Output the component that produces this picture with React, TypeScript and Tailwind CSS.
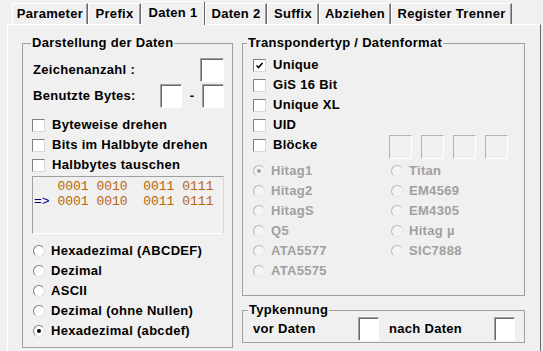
import React from "react";

const tabs = [
  { label: "Parameter", w: "w-[76px]" },
  { label: "Prefix", w: "w-[53px]" },
  { label: "Daten 1", w: "w-[64px]", active: true },
  { label: "Daten 2", w: "w-[62px]" },
  { label: "Suffix", w: "w-[52px]" },
  { label: "Abziehen", w: "w-[72px]" },
  { label: "Register Trenner", w: "w-[121px]" },
];

const sunken = "border border-t-[#a0a0a0] border-l-[#a0a0a0] border-b-white border-r-white shadow-[inset_1px_1px_0_#696969]";

function Check({ checked, label }: { checked?: boolean; label: string }) {
  return (
    <div className="h-[20px] flex items-center gap-[7px]">
      <span className="w-[13px] h-[13px] bg-white border border-t-[#808080] border-l-[#808080] border-b-[#d8d8d8] border-r-[#d8d8d8] flex items-center justify-center">
        {checked && (
          <svg width="9" height="9" viewBox="0 0 9 9">
            <path d="M1.5 4.5 L3.5 6.5 L7.5 2" fill="none" stroke="#000" strokeWidth="1.6" />
          </svg>
        )}
      </span>
      <span>{label}</span>
    </div>
  );
}

function Radio({ checked, label, disabled }: { checked?: boolean; label: string; disabled?: boolean }) {
  return (
    <div className={`h-[20px] flex items-center gap-[6px] ${disabled ? "text-[#a0a0a0]" : ""}`}>
      <span
        className={`w-[12px] h-[12px] rounded-full border flex items-center justify-center ${
          disabled
            ? "bg-[#f4f4f4] border-t-[#b8b8b8] border-l-[#b8b8b8] border-b-[#e8e8e8] border-r-[#e8e8e8]"
            : "bg-white border-t-[#808080] border-l-[#808080] border-b-[#e0e0e0] border-r-[#e0e0e0]"
        }`}
      >
        {checked && <span className={`w-[4px] h-[4px] rounded-full ${disabled ? "bg-[#a0a0a0]" : "bg-black"}`} />}
      </span>
      <span>{label}</span>
    </div>
  );
}

export default function App() {
  return (
    <div className="w-[543px] h-[351px] overflow-hidden bg-[#f0f0f0] text-black text-[13px] font-bold tracking-[0.3px] font-['Liberation_Sans',Arial,sans-serif] select-none">
      {/* tab strip */}
      <div className="h-[24px] flex items-end pl-[12px]">
        {tabs.map((t) =>
          t.active ? (
            <div
              key={t.label}
              className={`${t.w} h-[24px] -mb-px relative z-10 bg-[#f0f0f0] border-t border-l border-white border-r border-r-[#696969] flex items-center justify-center pb-[2px]`}
            >
              {t.label}
            </div>
          ) : (
            <div
              key={t.label}
              className={`${t.w} h-[21px] border-t border-l border-white border-r border-r-[#696969] shadow-[inset_-1px_0_0_#a0a0a0] flex items-center justify-center`}
            >
              {t.label}
            </div>
          )
        )}
      </div>

      {/* tab page */}
      <div className="ml-[7px] w-[534px] h-[330px] border-t border-l border-white border-r border-r-[#696969] flex pl-[14px] pt-[10px]">
        {/* left group */}
        <fieldset className="w-[211px] h-[313px] border border-[#a0a0a0]">
          <legend className="ml-[8px] px-[1px] leading-[16px]">Darstellung der Daten</legend>
          <div className="pl-[10px] pr-[8px] flex flex-col">
            <div className="mt-[7px] h-[24px] flex items-center justify-between">
              <span>Zeichenanzahl :</span>
              <span className={`w-[24px] h-[24px] bg-white ${sunken}`} />
            </div>
            <div className="mt-[2px] h-[24px] flex items-center">
              <span className="flex-1">Benutzte Bytes:</span>
              <span className={`w-[22px] h-[24px] bg-white ${sunken}`} />
              <span className="w-[20px] text-center">-</span>
              <span className={`w-[22px] h-[24px] bg-white ${sunken}`} />
            </div>
            <div className="mt-[7px] -ml-px flex flex-col">
              <Check label="Byteweise drehen" />
              <Check label="Bits im Halbbyte drehen" />
              <Check label="Halbbytes tauschen" />
            </div>
            <div className="mt-[1px] -ml-px w-[192px] h-[58px] border border-[#a0a0a0] border-b-white border-r-[#d8d8d8] pt-[2px] pl-[1px] font-['Liberation_Mono',monospace] font-normal tracking-normal text-[13px] leading-[15px] whitespace-pre">
              <div className="text-[#b8650a]">{"   0001 0010  0011 0111"}</div>
              <div className="text-[#b8650a]">
                <span className="text-[#000080]">{"=> "}</span>
                {"0001 0010  0011 0111"}
              </div>
            </div>
            <div className="mt-[7px] flex flex-col">
              <Radio label="Hexadezimal (ABCDEF)" />
              <Radio label="Dezimal" />
              <Radio label="ASCII" />
              <Radio label="Dezimal (ohne Nullen)" />
              <Radio label="Hexadezimal (abcdef)" checked />
            </div>
          </div>
        </fieldset>

        {/* right column */}
        <div className="ml-[9px] w-[283px] flex flex-col">
          <fieldset className="h-[261px] border border-[#a0a0a0]">
            <legend className="ml-[4px] px-[1px] leading-[16px]">Transpondertyp / Datenformat</legend>
            <div className="pl-[10px] mt-[4px] flex flex-col">
              <Check label="Unique" checked />
              <Check label="GiS 16 Bit" />
              <Check label="Unique XL" />
              <Check label="UID" />
              <div className="flex items-start">
                <div className="w-[136px]">
                  <Check label="Blöcke" />
                </div>
                <div className="flex gap-[9px]">
                  {[0, 1, 2, 3].map((i) => (
                    <span key={i} className="w-[23px] h-[24px] bg-[#f0f0f0] border border-[#b4b4b4] border-b-white border-r-white" />
                  ))}
                </div>
              </div>
              <div className="mt-[2px] grid grid-cols-[138px_1fr]">
                <Radio label="Hitag1" checked disabled />
                <Radio label="Titan" disabled />
                <Radio label="Hitag2" disabled />
                <Radio label="EM4569" disabled />
                <Radio label="HitagS" disabled />
                <Radio label="EM4305" disabled />
                <Radio label="Q5" disabled />
                <Radio label="Hitag µ" disabled />
                <Radio label="ATA5577" disabled />
                <Radio label="SIC7888" disabled />
                <Radio label="ATA5575" disabled />
              </div>
            </div>
          </fieldset>

          <fieldset className="mt-[6px] h-[41px] border border-[#a0a0a0]">
            <legend className="ml-[5px] px-[1px] leading-[16px]">Typkennung</legend>
            <div className="pl-[10px] -mt-px h-[24px] flex items-center">
              <span className="w-[105px]">vor Daten</span>
              <span className={`w-[21px] h-[24px] bg-white ${sunken}`} />
              <span className="w-[10px]" />
              <span className="w-[105px]">nach Daten</span>
              <span className={`w-[21px] h-[24px] bg-white ${sunken}`} />
            </div>
          </fieldset>
        </div>
      </div>
    </div>
  );
}
